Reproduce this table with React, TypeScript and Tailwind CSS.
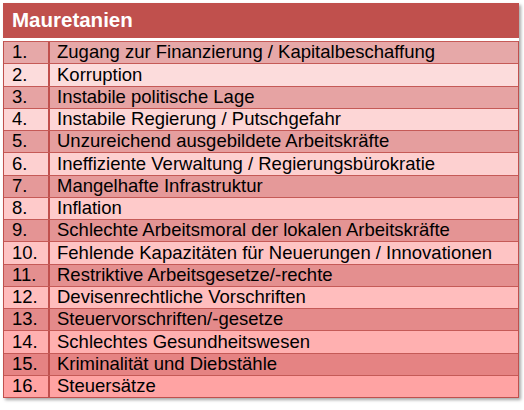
import React from "react";

type Row = { nr: string; label: string; bg: string };

// Zeilenfarben werden nach unten hin kräftiger
const rows: Row[] = [
    { nr: "1.", label: "Zugang zur Finanzierung / Kapitalbeschaffung", bg: "bg-[#e6a8a8]" },
    { nr: "2.", label: "Korruption", bg: "bg-[#fcdcdc]" },
    { nr: "3.", label: "Instabile politische Lage", bg: "bg-[#e6a3a3]" },
    { nr: "4.", label: "Instabile Regierung / Putschgefahr", bg: "bg-[#fdd6d6]" },
    { nr: "5.", label: "Unzureichend ausgebildete Arbeitskräfte", bg: "bg-[#e59e9e]" },
    { nr: "6.", label: "Ineffiziente Verwaltung / Regierungsbürokratie", bg: "bg-[#fdd0d0]" },
    { nr: "7.", label: "Mangelhafte Infrastruktur", bg: "bg-[#e59999]" },
    { nr: "8.", label: "Inflation", bg: "bg-[#fecaca]" },
    { nr: "9.", label: "Schlechte Arbeitsmoral der lokalen Arbeitskräfte", bg: "bg-[#e49494]" },
    { nr: "10.", label: "Fehlende Kapazitäten für Neuerungen / Innovationen", bg: "bg-[#fec4c4]" },
    { nr: "11.", label: "Restriktive Arbeitsgesetze/-rechte", bg: "bg-[#e48f8f]" },
    { nr: "12.", label: "Devisenrechtliche Vorschriften", bg: "bg-[#ffbdbd]" },
    { nr: "13.", label: "Steuervorschriften/-gesetze", bg: "bg-[#e48a8a]" },
    { nr: "14.", label: "Schlechtes Gesundheitswesen", bg: "bg-[#ffb0b0]" },
    { nr: "15.", label: "Kriminalität und Diebstähle", bg: "bg-[#e58383]" },
    { nr: "16.", label: "Steuersätze", bg: "bg-[#ffa3a3]" },
];

export default function App() {
    return (
        <div className="w-[524px] h-[410px] bg-white pt-[3px] pl-[3px] font-['Liberation_Sans',Arial,sans-serif]">
            <div className="w-[516px] shadow-[2px_2px_3px_rgba(0,0,0,0.35)]">
                {/* Kopfzeile */}
                <div className="h-[35px] bg-[#c0504d] border-b-[3px] border-white box-content flex items-center pl-[9px]">
                    <span className="text-white font-bold text-[20.5px] leading-none">Mauretanien</span>
                </div>
                {/* Tabelle */}
                <div className="border-l border-r border-b border-[#c0504d]">
                    {rows.map((row) => (
                        <div key={row.nr} className={`flex h-[22.25px] border-t border-[#c55a57] ${row.bg}`}>
                            <div className="w-[46px] border-r-2 border-[#c0504d] pl-[8px] flex items-center text-[18.5px] text-black leading-none">
                                {row.nr}
                            </div>
                            <div className="flex-1 pl-[7px] flex items-center text-[18.5px] text-black leading-none whitespace-nowrap">
                                {row.label}
                            </div>
                        </div>
                    ))}
                </div>
            </div>
        </div>
    );
}
